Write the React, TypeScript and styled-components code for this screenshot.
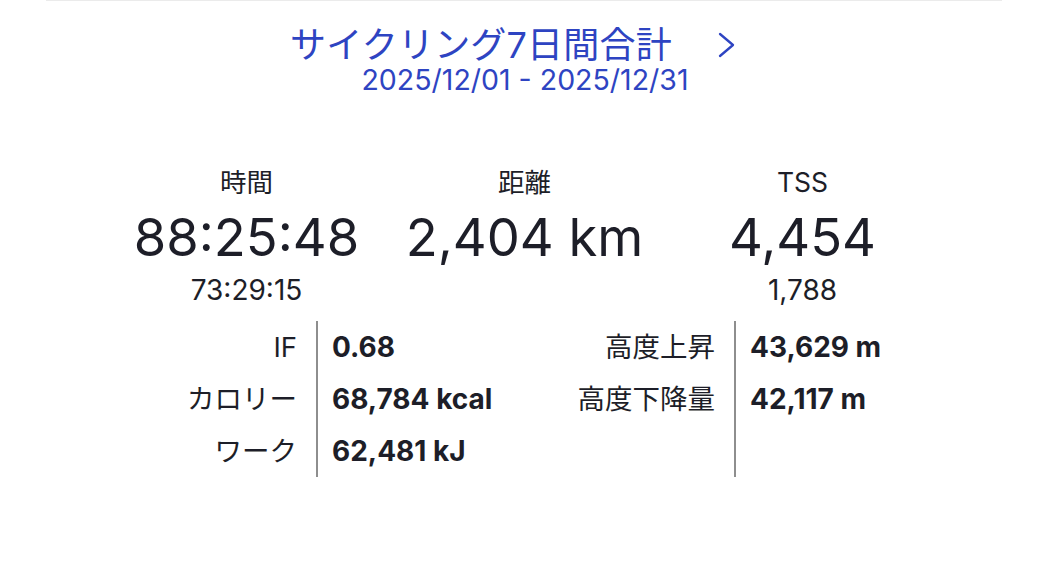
import styled, { createGlobalStyle } from 'styled-components';

const GlobalStyle = createGlobalStyle`
  body {
    margin: 0;
    background: #ffffff;
    font-family: Inter, "Noto Sans CJK JP", sans-serif;
    color: #1d1e28;
  }
`;

const Page = styled.div`
  width: 1048px;
  height: 574px;
  overflow: hidden;
`;

const TopRule = styled.div`
  height: 1px;
  margin: 0 46px;
  background: #ebebeb;
`;

const Header = styled.div`
  display: flex;
  flex-direction: column;
  align-items: center;
  padding-top: 24px;
  color: #2e44c2;
`;

const TitleRow = styled.div`
  display: flex;
  align-items: center;
  gap: 44px;
  padding-right: 22px;
`;

const Title = styled.div`
  font-size: 36px;
  line-height: 40px;
  font-weight: 400;
  letter-spacing: 0.2px;
`;

const DateRange = styled.div`
  font-size: 28.5px;
  line-height: 30px;
  padding-left: 2px;
`;

const Stats = styled.div`
  display: grid;
  grid-template-columns: repeat(3, 278px);
  justify-content: center;
  margin-top: 71px;
  padding-left: 1px;
`;

const Stat = styled.div`
  display: flex;
  flex-direction: column;
  align-items: center;
`;

const StatLabel = styled.div`
  font-size: 26.5px;
  line-height: 32px;
`;

const StatValue = styled.div`
  font-size: 52.5px;
  line-height: 60px;
  margin-top: 9px;
`;

const StatSub = styled.div`
  font-size: 28px;
  line-height: 34px;
  margin-top: 6px;
  min-height: 34px;
`;

const Details = styled.div`
  display: flex;
  margin-top: 14px;
  padding-left: 148px;
`;

const Table = styled.div`
  display: flex;
`;

const Labels = styled.div`
  width: 149px;
  padding-right: 19px;
  text-align: right;
`;

const Values = styled.div<{ $width: number }>`
  width: ${(p) => p.$width}px;
  box-sizing: border-box;
  border-left: 2px solid #8e8e8e;
  padding-left: 14px;
  height: 156px;
`;

const Cell = styled.div<{ $bold?: boolean }>`
  height: 52px;
  line-height: 52px;
  font-size: ${(p) => (p.$bold ? 28 : 27.5)}px;
  font-weight: ${(p) => (p.$bold ? 700 : 400)};
  white-space: nowrap;
`;

const Chevron = () => (
  <svg width="20" height="28" viewBox="0 0 20 28" fill="none">
    <path d="M4 3 L17 14 L4 25" stroke="#2e44c2" strokeWidth="2.3" strokeLinecap="round" strokeLinejoin="round" />
  </svg>
);

const stats = [
  { label: '時間', value: '88:25:48', sub: '73:29:15' },
  { label: '距離', value: '2,404 km', sub: '' },
  { label: 'TSS', value: '4,454', sub: '1,788' },
];

const left = [
  ['IF', '0.68'],
  ['カロリー', '68,784 kcal'],
  ['ワーク', '62,481 kJ'],
];

const right = [
  ['高度上昇', '43,629 m'],
  ['高度下降量', '42,117 m'],
];

export default function App() {
  return (
    <Page>
      <GlobalStyle />
      <TopRule />
      <Header>
        <TitleRow>
          <Title>サイクリング7日間合計</Title>
          <Chevron />
        </TitleRow>
        <DateRange>2025/12/01 - 2025/12/31</DateRange>
      </Header>
      <Stats>
        {stats.map((s) => (
          <Stat key={s.label}>
            <StatLabel>{s.label}</StatLabel>
            <StatValue>{s.value}</StatValue>
            <StatSub>{s.sub}</StatSub>
          </Stat>
        ))}
      </Stats>
      <Details>
        <Table>
          <Labels>
            {left.map(([l]) => (
              <Cell key={l}>{l}</Cell>
            ))}
          </Labels>
          <Values $width={250}>
            {left.map(([l, v]) => (
              <Cell key={l} $bold>{v}</Cell>
            ))}
          </Values>
        </Table>
        <Table>
          <Labels>
            {right.map(([l]) => (
              <Cell key={l}>{l}</Cell>
            ))}
          </Labels>
          <Values $width={220}>
            {right.map(([l, v]) => (
              <Cell key={l} $bold>{v}</Cell>
            ))}
          </Values>
        </Table>
      </Details>
    </Page>
  );
}
